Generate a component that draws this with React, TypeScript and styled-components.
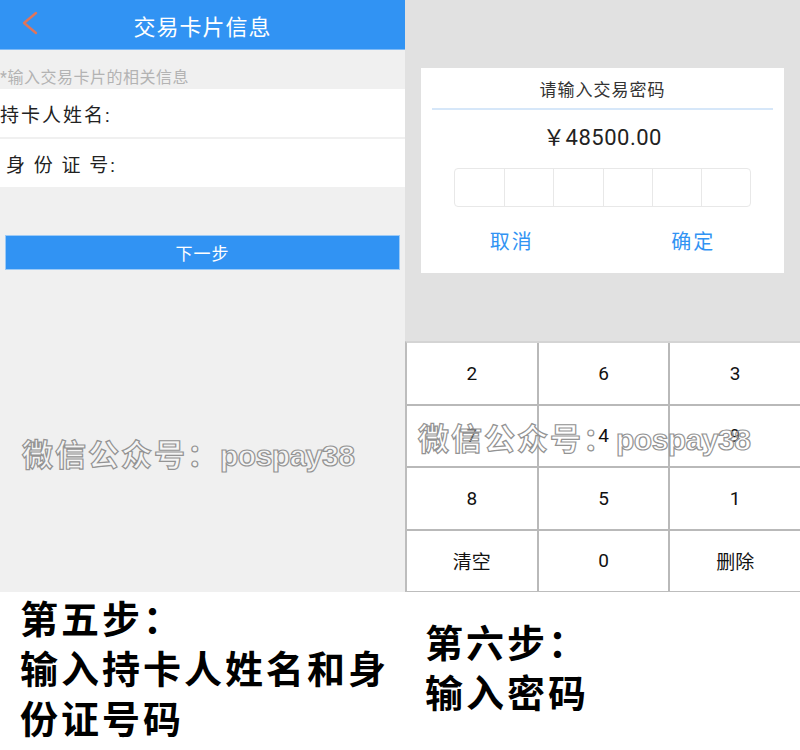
import React from 'react';
import styled, { createGlobalStyle } from 'styled-components';

const GlobalStyle = createGlobalStyle`
  html, body {
    margin: 0;
    padding: 0;
    background: #ffffff;
  }
  body {
    font-family: Roboto, "Noto Sans CJK SC", sans-serif;
  }
`;

const Page = styled.div`
  width: 800px;
  height: 750px;
  display: flex;
  flex-direction: column;
  overflow: hidden;
  background: #ffffff;
`;

const Screens = styled.div`
  display: flex;
  height: 592px;
`;

const Screen = styled.div<{ $width: number; $bg: string }>`
  position: relative;
  width: ${p => p.$width}px;
  flex-shrink: 0;
  background: ${p => p.$bg};
  display: flex;
  flex-direction: column;
`;

/* ---------- left screen ---------- */

const Header = styled.div`
  height: 50px;
  background: #3193f3;
  border-bottom: 1px solid #7fbaf5;
  box-sizing: border-box;
  display: flex;
  align-items: center;
  justify-content: center;
  position: relative;
`;

const BackIcon = styled.svg`
  position: absolute;
  left: 21px;
  top: 11px;
`;

const Title = styled.div`
  color: #ffffff;
  font-size: 22px;
  letter-spacing: 1px;
`;

const Hint = styled.div`
  height: 39px;
  display: flex;
  align-items: flex-end;
  padding-bottom: 1px;
  box-sizing: border-box;
  font-size: 16px;
  letter-spacing: 0.5px;
  color: #b3b3b3;
`;

const FormRow = styled.div<{ $indent?: number }>`
  height: 48px;
  background: #ffffff;
  display: flex;
  align-items: center;
  padding-left: ${p => p.$indent ?? 0}px;
  font-size: 19px;
  letter-spacing: 2px;
  color: #222222;
  white-space: pre;
`;

const Divider = styled.div`
  height: 2px;
  background: #f0f0f0;
`;

const NextButton = styled.div`
  margin: 48px 5px 0;
  height: 35px;
  background: #3193f3;
  border: 1px solid #9ccaf6;
  box-sizing: border-box;
  display: flex;
  align-items: center;
  justify-content: center;
  color: #ffffff;
  font-size: 17px;
  letter-spacing: 1px;
`;

/* ---------- right screen ---------- */

const Card = styled.div`
  margin: 68px 16px 0;
  height: 205px;
  background: #ffffff;
  display: flex;
  flex-direction: column;
  align-items: center;
`;

const CardTitle = styled.div`
  width: calc(100% - 22px);
  height: 42px;
  box-sizing: border-box;
  border-bottom: 2px solid #d6e7f9;
  display: flex;
  align-items: center;
  justify-content: center;
  font-size: 17px;
  letter-spacing: 1px;
  color: #333333;
`;

const Amount = styled.div`
  margin-top: 9px;
  font-size: 22px;
  color: #222222;
  letter-spacing: 0.5px;
`;

const PinBoxes = styled.div`
  margin-top: 17px;
  width: 297px;
  height: 39px;
  display: grid;
  grid-template-columns: repeat(6, 1fr);
  border: 1px solid #e8e8e8;
  border-radius: 4px;
  box-sizing: border-box;
`;

const PinCell = styled.div`
  border-left: 1px solid #e8e8e8;
  &:first-child {
    border-left: none;
  }
`;

const ActionRow = styled.div`
  width: 100%;
  flex: 1;
  display: grid;
  grid-template-columns: 1fr 1fr;
  align-items: center;
  justify-items: center;
`;

const ActionButton = styled.div`
  color: #3193f3;
  font-size: 20px;
  letter-spacing: 2px;
`;

const Keypad = styled.div`
  margin-top: auto;
  display: grid;
  grid-template-columns: repeat(3, 1fr);
  grid-auto-rows: 1fr;
  gap: 2px;
  height: 251px;
  box-sizing: border-box;
  background: #b9b9b9;
  border-top: 2px solid #d4d4d4;
  border-left: 2px solid #bdbdbd;
  border-bottom: 1px solid #bdbdbd;
`;

const Key = styled.div`
  background: #ffffff;
  display: flex;
  align-items: center;
  justify-content: center;
  font-size: 19px;
  color: #111111;
`;

/* ---------- watermark overlay ---------- */

const Watermark = styled.div<{ $left: number; $top: number }>`
  position: absolute;
  left: ${p => p.$left}px;
  top: ${p => p.$top}px;
  display: flex;
  align-items: baseline;
  white-space: pre;
  font-weight: 700;
  color: rgba(255, 255, 255, 0.35);
  -webkit-text-stroke: 1.2px #939393;
  pointer-events: none;
`;

const WmCjk = styled.span`
  font-family: "Noto Sans CJK SC", sans-serif;
  font-size: 31px;
  letter-spacing: 2px;
`;

const WmLatin = styled.span`
  font-family: "Liberation Sans", sans-serif;
  font-size: 30px;
  letter-spacing: -0.5px;
`;

/* ---------- captions ---------- */

const Captions = styled.div`
  flex: 1;
  display: flex;
`;

const Caption = styled.div<{ $width: number; $top: number }>`
  width: ${p => p.$width}px;
  padding: ${p => p.$top}px 0 0 20px;
  box-sizing: border-box;
  font-family: "Noto Sans CJK SC", sans-serif;
  font-weight: 700;
  font-size: 38px;
  line-height: 50px;
  letter-spacing: 3px;
  color: #000000;
`;

const keys = ['2', '6', '3', '7', '4', '9', '8', '5', '1', '清空', '0', '删除'];

const WatermarkText = ({ left, top }: { left: number; top: number }) => (
  <Watermark $left={left} $top={top}>
    <WmCjk>微信公众号：</WmCjk>
    <WmLatin>pospay38</WmLatin>
  </Watermark>
);

const App = () => {
  return (
    <Page>
      <GlobalStyle />
      <Screens>
        <Screen $width={405} $bg="#f0f0f0">
          <Header>
            <BackIcon width="18" height="24" viewBox="0 0 18 24">
              <path d="M15 2 L3 12 L15 22" fill="none" stroke="#e0755a" strokeWidth="2.4" strokeLinecap="round" strokeLinejoin="round" />
            </BackIcon>
            <Title>交易卡片信息</Title>
          </Header>
          <Hint>*输入交易卡片的相关信息</Hint>
          <FormRow>持卡人姓名:</FormRow>
          <Divider />
          <FormRow $indent={6}>身 份 证 号:</FormRow>
          <NextButton>下一步</NextButton>
          <WatermarkText left={22} top={430} />
        </Screen>
        <Screen $width={395} $bg="#e1e1e1">
          <Card>
            <CardTitle>请输入交易密码</CardTitle>
            <Amount>￥48500.00</Amount>
            <PinBoxes>
              {Array.from({ length: 6 }).map((_, i) => (
                <PinCell key={i} />
              ))}
            </PinBoxes>
            <ActionRow>
              <ActionButton>取消</ActionButton>
              <ActionButton>确定</ActionButton>
            </ActionRow>
          </Card>
          <Keypad>
            {keys.map(k => (
              <Key key={k}>{k}</Key>
            ))}
          </Keypad>
          <WatermarkText left={13} top={414} />
        </Screen>
      </Screens>
      <Captions>
        <Caption $width={405} $top={0}>
          第五步：<br />
          输入持卡人姓名和身<br />
          份证号码
        </Caption>
        <Caption $width={395} $top={24}>
          第六步：<br />
          输入密码
        </Caption>
      </Captions>
    </Page>
  );
};

export default App;
